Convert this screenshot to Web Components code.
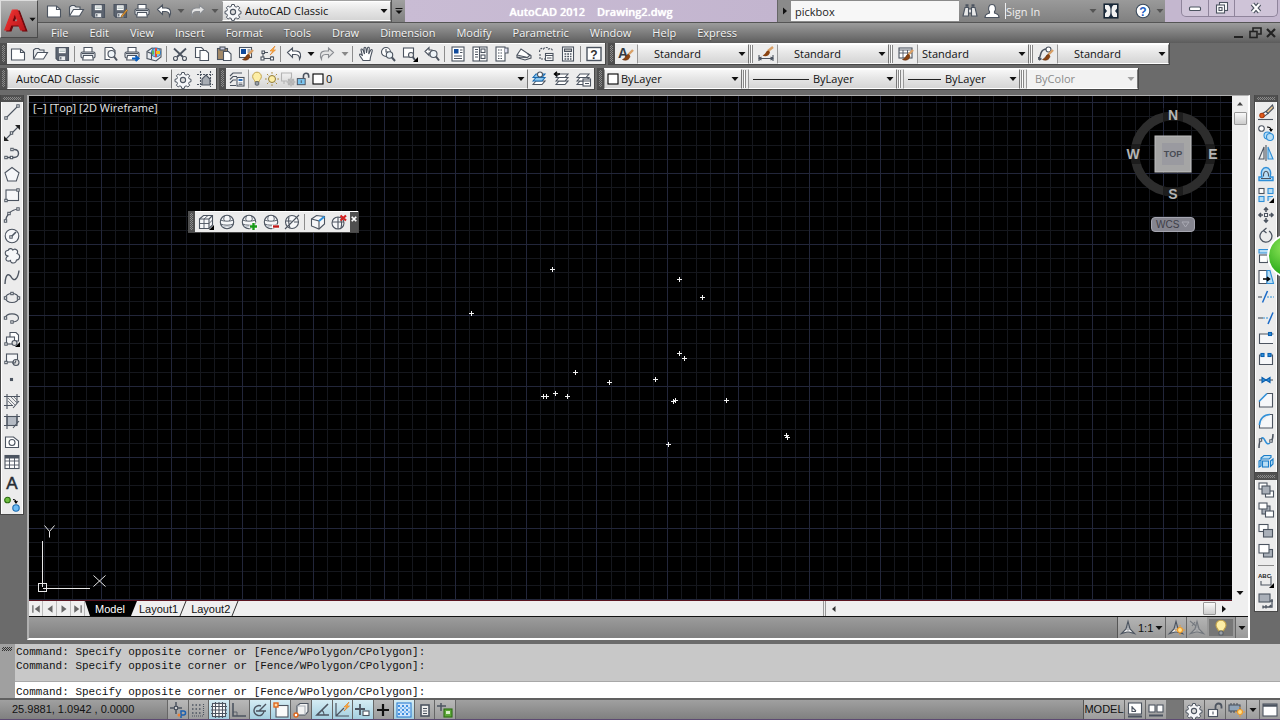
<!DOCTYPE html>
<html lang="en">
<head>
<meta charset="utf-8">
<title>AutoCAD 2012 Drawing2.dwg</title>
<style>
html,body{margin:0;height:100%}
body{font-family:"Open Sans","Noto Sans",sans-serif;font-size:11px;color:#111;background:#6b6b6b;overflow:hidden}
</style>
</head>
<body>
<cad-app></cad-app>
<script>
const BASE = `*{box-sizing:border-box}
button,select,input{font:inherit;color:inherit;margin:0;padding:0;border:0;background:none;border-radius:0;outline:0}
ul{list-style:none;margin:0;padding:0}`;

function define(tag, css, html) {
  const template = document.createElement('template');
  customElements.define(tag, class extends HTMLElement {
    connectedCallback() {
      if (this.shadowRoot) return;
      template.innerHTML = `<style>${BASE}${css}</style>${typeof html === 'function' ? html(this) : html}`;
      this.attachShadow({mode: 'open'}).append(template.content.cloneNode(true));
    }
  });
}

/* Icon shapes on a 16 x 16 grid; the default pen is dark and unfilled. */
const L = '#f6f7f9', B = '#2f8fd8', PB = '#b9def5';
const brush = '<path d="M15 4l-5 5" stroke="#d9a066" stroke-width="2.4"/><path d="M10.5 8.500c-3 0-2 3.500-6 5 3 1.500 7 .5 7.500-3.500z" fill="#8a4312" stroke="#5c2c0c" stroke-width=".6"/>';
const glow = (x, y) => `<circle cx="${x}" cy="${y}" r="2.500" fill="#ffe08a" stroke="#f59b23"/><path d="M${x} ${y - 5}v1.500M${x} ${y + 3.5}v1.500M${x - 5} ${y}h1.500M${x + 3.5} ${y}h1.500" stroke="#f59b23"/>`;
const node = (x, y, f = '#fff') => `<rect x="${x - 1.2}" y="${y - 1.2}" width="2.400" height="2.400" fill="${f}" stroke-width="1"/>`;
const printer = `<path d="M4 6V1.500h8V6" fill="#fff"/><rect x="1" y="6" width="14" height="6" rx="1.500" fill="#dfe2e6"/><path d="M3.500 9.500h9l.8 4.500H2.700z" fill="#fff"/><path d="M2 7.500h12"/>`;
const floppy = `<path d="M2 1.500h12.500v13H4L2 12.500z" fill="#5c6470"/><rect x="4.500" y="2" width="7.500" height="5.500" fill="#fff" stroke-width=".6"/><path d="M5.500 4h5.500M5.500 5.500h5.500" stroke="#9aa" stroke-width=".7"/><rect x="5" y="10" width="6.500" height="4.500" fill="#eceef0" stroke-width=".6"/><path d="M6.800 11v2.500"/>`;
const lens = `<circle cx="9.500" cy="8" r="3.500" fill="#eef4f8"/><path d="M12 10.500l3 4" stroke-width="2"/>`;
const sphere = `<circle cx="8" cy="8" r="6.700" fill="${L}"/><path d="M1.500 6c3 1.600 10 1.600 13 0M1.500 10c3 1.600 10 1.600 13 0M5.500 2c-1 3-1 3 0 5M10.500 2c1 3 1 3 0 5" stroke-width=".9"/><path d="M3 11.500c3 1.500 7 1.500 10 0" stroke="#c3c9d2"/>`;
const cube = `<path d="M1.500 5l4-3.500h9V11L11 14.500H1.500z" fill="${L}"/><path d="M1.500 5H11v9.500M11 5l3.500-3.500"/>`;
const compass = f => `<path d="M8 1.500l2 7.500 4.500 4.500-5.500-1.500h-2L1.500 13.500 6 9z" fill="${f}" stroke-width="1.200"/><path d="M8 5l1 5H7z" fill="#fff" stroke-width=".5"/>`;
const gear = `<path d="M6.700 1.500h2.600l.4 1.900 1.500.7 1.700-1.100 1.800 1.800-1.100 1.700.6 1.400 1.800.4v2.400l-1.800.4-.6 1.500 1.100 1.600-1.800 1.800-1.700-1.100-1.500.6-.4 1.900H6.700l-.4-1.900-1.500-.6-1.600 1.100-1.800-1.800 1.100-1.600-.6-1.500L0 10.700V8.300l1.900-.4.6-1.400-1.100-1.700L3.200 3l1.600 1.100 1.500-.7z" fill="${L}" stroke-width="1"/><circle cx="8" cy="9" r="2.600" fill="#ddd"/>`;
const lock = c => `<rect x="1.500" y="7.500" width="9" height="7" fill="${c}"/><path d="M8.500 7V4.500a3 3 0 0 1 6 0V6.500" stroke-width="1.800"/><path d="M6 9.500v3"/>`;
const stack = (x = 0) => `<path d="M${2 + x} 13.500l3-3.500h9l-3 3.500z" fill="#fff"/><path d="M${2 + x} 10l3-3.500h9l-3 3.500z" fill="#fff"/><path d="M${2 + x} 6.500l3-3.500h9l-3 3.500z" fill="#fff"/>`;
const bulb = `<path d="M5.500 11c0-2-2.500-3-2.500-5.800a5 5 0 0 1 10 0C13 8 10.500 9 10.500 11z" fill="#fdeea6" stroke="#c2a24a"/><rect x="6" y="11" width="4" height="4" rx="1" fill="#9aa0a6" stroke="#5a6068"/>`;
const two = (a, b) => `<rect x="1" y="1.500" width="9" height="7" fill="${a}"/><rect x="5.500" y="6.500" width="9" height="7.500" fill="${b}"/>`;
const ICONS = {
  new: `<path d="M1.500 3h9l4 3.500V14h-13z" fill="#fff"/><path d="M10.500 3v3.500h4"/>`,
  open: `<path d="M1.500 12.500V4l2-1.500h3L8 4h4v2.500" fill="#e8eaed"/><path d="M1.500 13l4-6.500h10l-4 6.500z" fill="#fff"/>`,
  save: floppy,
  saveas: floppy + '<path d="M15.500 7.500l-5 6-1.500 1 .5-2 5-6z" fill="#f3a33a" stroke="#8a5a1a" stroke-width=".7"/>',
  print: printer,
  preview: `<path d="M3 1.500h7l3 3V8M3 1.500v12h5" fill="#fff"/>` + lens,
  publish: printer + `<path d="M8 12.500h6M11.500 10l3 2.500-3 2.500" stroke="#0a5fc0" stroke-width="2"/>`,
  dwf: `<path d="M1 5.500l5-3.500 9 1v8l-5 4-9-2.500z" fill="#e8ebef"/><circle cx="10" cy="6.500" r="4.500" fill="#7fc4e8" stroke="#3678b8"/><path d="M10 2v9" stroke="#e14a3a" stroke-width="2"/><path d="M10 6.500h4" stroke="#f0c020" stroke-width="3"/><path d="M7 4.500v4" stroke="#5cb85c" stroke-width="2"/><path d="M1.500 6l4 1.500v6"/>`,
  undo: `<path d="M1.500 6.500L6.500 2v3H10c5 0 5.500 5 3.500 8.500 0-3-1-5-4-5h-3v3z" fill="#fff"/>`,
  redo: `<path d="M14.500 6.500L9.500 2v3H6C1 5 .5 10 2.500 13.500c0-3 1-5 4-5h3v3z" fill="#e4e4e4" stroke="#8a8d92"/>`,
  gear,
  cut: `<path d="M2 2.500l9 8.500M14 2.500L5 11" stroke-width="1.800"/><circle cx="3.500" cy="12.500" r="2"/><circle cx="12.500" cy="12.500" r="2"/>`,
  copyclip: `<path d="M1.500 1.500h6l2 2v8h-8z" fill="#fff"/><path d="M6 4.500h6l2.500 2.500v7.500H6z" fill="#fff"/>`,
  paste: `<rect x="1.500" y="2.500" width="10" height="11" fill="#a48a68"/><rect x="4" y="1" width="5" height="3" fill="#ccd"/><path d="M7.500 5.500h5l2.500 2.500v6.500H7.500z" fill="#fff"/>`,
  match: `<rect x="1.500" y="1.500" width="12" height="10" fill="#fff"/><rect x="3" y="3" width="5" height="5" fill="#0f4a9c" stroke="none"/><path d="M9.500 4h3M9.500 6h3"/>` + brush,
  blockedit: `<path d="M3 6.500h5M3 6.500v6M1 12.500h13M12 10v4" /><rect x="1" y="11" width="3" height="3" fill="#fff"/><rect x="10.500" y="11" width="3" height="3" fill="#fff"/><rect x="2" y="5" width="2.500" height="2.500" fill="#fff"/><path d="M15 0l-5 5h3l-3 4 5.500-5H13z" fill="#ffb347" stroke="#e07b1a" stroke-width=".6"/>`,
  pan: `<path d="M5 14.500C3.500 11.500 1 9.500 1.500 8.500s2 0 3 1.500L3 4c0-1.500 1.500-1 2 0l1.500 4L6 2.500c0-1.500 1.800-1.500 2 0L8.500 7l1-5c.5-1.200 2-1 1.800.5L10.700 8l2-4c.8-1 2-.3 1.500 1L12.500 11l-.5 3.500z" fill="#fff"/>`,
  zoomrt: `<circle cx="6" cy="6" r="4.500" fill="#fff"/><path d="M6 3v3h2.500"/><circle cx="9.500" cy="9" r="3.200" fill="#eef4f8"/><path d="M12 11.500l3 3.500" stroke-width="2"/>`,
  zoomwin: `<rect x="1.500" y="2" width="10" height="9" fill="#fff"/><path d="M10 10l3 4" stroke-width="2"/><circle cx="9" cy="9" r="2.500" fill="#eee"/><path d="M16 11v5h-5z" fill="#000" stroke="none"/>`,
  zoomprev: `<path d="M1 5.500l4-4v2.500h3v3H5V9.500z" fill="#fff"/>` + lens,
  props: `<rect x="2" y="1" width="12" height="14" fill="#fff"/><rect x="4" y="3" width="4.500" height="4.500" fill="#0f4a9c" stroke="none"/><path d="M10 4h2.500M10 6.500h2.500M4 10h8M4 12.500h8"/>`,
  dc: `<rect x="1" y="1" width="14" height="14" fill="#fff"/><path d="M3 3.500h3M3 6h3M3 8.500h3M3 11h3M7.500 1v14"/><rect x="9" y="3" width="4" height="3.500"/><rect x="9" y="9" width="4" height="3.500"/>`,
  palettes: `<rect x="2" y="1" width="9" height="14" fill="#fff"/><path d="M4 4h5M4 7h5M4 10h5M4 12.500h5" stroke-dasharray="1.500 1"/><path d="M11 2h3v5h-3" fill="#dde"/>`,
  sheetset: `<path d="M1 9l4-6 9 6-2.500 2.500z" fill="#fff"/><path d="M1 9v2.500l8 2.500 6-2V9.500l-4-2M1 11l10 .5"/>`,
  markup: `<path d="M1.500 6c0-3 2-4.500 4-3 1-2 5-2 5 0 2-1 4 0 4 2" stroke-dasharray="2 1"/><path d="M2 8v5h5" stroke-dasharray="2 1"/><rect x="7.500" y="7.500" width="7.500" height="7" fill="#fff"/><path d="M7.500 9.500H15M9 12h4.500"/>`,
  calc: `<rect x="2.500" y="1" width="11" height="14" fill="#fff"/><rect x="4.500" y="3" width="7" height="2.500" fill="#bbb"/><path d="M4.500 8h7M4.500 10.500h7M4.500 13h7" stroke-dasharray="1.800 .9" stroke-width="1.500"/>`,
  help: `<rect x="1" y="1.500" width="14" height="13" fill="#fff" stroke-width="1.400"/><text x="8" y="12.500" text-anchor="middle" font-family="Liberation Sans" font-weight="700" font-size="12" fill="#333" stroke="none">?</text>`,
  textstyle: `<text x="0" y="12" font-family="Liberation Sans" font-weight="700" font-size="14" fill="#333b44" stroke="none">A</text>` + brush,
  dimstyle: `<path d="M1 9v6M15 9v6M1 12.500h14M3.500 11L1 12.500 3.500 14M12.500 11l2.500 1.500-2.500 1.500"/><path d="M15 1l-5 4" stroke="#d9a066" stroke-width="2.400"/><path d="M10.500 4.500c-3 0-2 3.500-6 5 3 1.500 7 .5 7.500-3.500z" fill="#8a4312" stroke="none"/>`,
  tablestyle: `<rect x="1" y="2" width="13" height="10" fill="#fff"/><path d="M1 4h13M1 7h13M5 4v8M9.500 4v8" stroke-width=".9"/>` + brush,
  leaderstyle: `<path d="M1 14l2-7c1-3 3-4 6-4M1 14l-.3-3M1 14l2.500-1.500" stroke-width="1.500"/><circle cx="10.500" cy="3.500" r="2.500" fill="#fff"/>` + brush,
  wsframe: `<path d="M0 3.500h16M0 13.500h16M3.500 0v16M13.500 0v16" stroke-dasharray="2 1"/><path d="M5 14V8l4-4 4 4v6z" fill="#a7acb3"/>`,
  layerprops: `<path d="M1 5l3-3h9M1 8.500l3-3h4M1 12l3-3h3M1 14.500h6"/><rect x="8" y="6.500" width="7" height="8.500" fill="#fff"/><rect x="9.500" y="8" width="4" height="2" fill="#2f6fb8" stroke="none"/><path d="M9.500 12h4M9.500 13.500h4" stroke-width=".8"/>`,
  bulb, sun: `<circle cx="8" cy="8" r="4" fill="#fdeea6" stroke="#8a7430"/><path d="M8 0v2M8 14v2M0 8h2M14 8h2M2.300 2.300l1.500 1.500M12.200 12.200l1.500 1.500M13.700 2.300l-1.500 1.500M3.800 12.200l-1.500 1.500" stroke="#a8893a"/>`,
  vpfreeze: `<g stroke="#b4b4b4"><path d="M7 10H1.500V2h10v5M4 10v3"/><circle cx="11" cy="11" r="3" fill="#ddd"/><path d="M11 6.500v9M6.500 11h9M8 8l6 6M14 8l-6 6"/></g>`,
  unlock: lock('#7cc4ee'), unlockgray: lock('#fff'),
  swatch: `<rect x="3" y="3" width="10" height="10" fill="#fff" stroke="#000"/>`,
  layercur: `<path d="M2 13.500l3-3.500h9l-3 3.500z" fill="#fff"/><path d="M2 10l3-3.500h9l-3 3.500zM2 6.500l3-3.500h9l-3 3.500z" fill="#8cc8f0" stroke="#1a6ab0"/><circle cx="9" cy="3.500" r="2.500" fill="#fff"/>`,
  layerprev: stack(1) + `<path d="M7 3H1.500M4 .8L1.500 3 4 5.200" stroke="#000" stroke-width="1.500"/>`,
  layerstates: stack() + `<rect x="8" y="8" width="7.500" height="7" fill="#fff"/><path d="M8 10h7.500M10 12.500h4"/>`,
  binoc: `<path d="M1 13L3 4.500h3.500V13zM9.500 13V4.500H13L15 13zM6.500 6h3v4h-3z" fill="#e8e8e8"/><path d="M3.500 2.500h3M9.500 2.500h3" stroke-width="2.500"/>`,
  user: `<path d="M1 14.500c0-4 3-3.500 4.500-4.500v-1.500C4 7 4 1.500 8 1.500s4 5.500 2.500 7V10c1.500 1 4.500.5 4.500 4.500z" fill="#fff"/>`,
  exchange: `<rect x="1" y="1" width="14" height="14" fill="#1f2f42" stroke="#11202f"/><path d="M2 2h3.500c2 1.500 2 4 2 6s0 4.500-2 6H2zM14 2h-3.500c-2 1.500-2 4-2 6s0 4.500 2 6H14z" fill="#f2f2f2" stroke="none"/><path d="M2 5.500l2 2.500-2 2.500zM14 5.500L12 8l2 2.500z" fill="#1f2f42" stroke="none"/>`,
  about: `<circle cx="8" cy="8" r="6.800" fill="#fff" stroke="#3a4a5c"/><text x="8" y="12.500" text-anchor="middle" font-family="Liberation Sans" font-weight="700" font-size="12" fill="#1f5fc4" stroke="none">?</text>`,
  line: `<path d="M2.500 13.500l11-11"/>` + node(2, 14) + node(14, 2),
  xline: `<path d="M2 14L14 2"/><path d="M0 16v-5l5 5zM16 0v5l-5-5z" fill="#222" stroke="none"/>` + node(7.5, 8),
  pline: `<path d="M2 12.500h8c6 0 6-8 0-8" stroke-width="1.400"/>` + node(2, 12.5) + node(7.5, 12.5) + node(8, 4.5),
  polygon: `<path d="M8 1.500l7 5.300L12.300 15H3.700L1 6.800z" fill="${L}"/>`,
  rect: `<rect x="2" y="3" width="12.500" height="10.500" fill="${L}"/>` + node(2, 13.5) + node(14, 3),
  arc: `<path d="M1.500 14.500C2 8 7 2.500 14.500 2"/>` + node(1.5, 14) + node(5, 6.5) + node(14, 2),
  circle: `<circle cx="8" cy="8" r="6.800" fill="${L}"/><path d="M7.500 8.500l4.500-4.500" stroke-width="1.600"/>` + node(7, 9),
  cloud: `<path d="M4.500 8C0 8 .500 2 4 2.500 5-.5 9 .5 8.500 2.500 11-.5 15 2.500 13 5.500c4 1 3 6.500-.5 6.500-.5 4-6 4-6 .500C2 15 0 9.500 4.500 8z" fill="${L}"/>`,
  spline: `<path d="M1 15C1.500 4 5 4 7.500 8.500S14 10 15 1.500" stroke-width="1.400"/>`,
  ellipse: `<ellipse cx="8" cy="8" rx="6.500" ry="4.500"/>` + node(1.5, 8) + node(14.5, 8) + node(8, 3.5),
  elarc: `<path d="M1.500 8C2 2.500 14 2.500 14.500 8c0 2.500-3 4-6.500 4"/>` + node(1.5, 8) + node(8, 12),
  insert: `<path d="M6 1.500h6l2.500 2.500v6H6z" fill="#fff"/><rect x="2.500" y="6" width="8" height="7" fill="${L}"/><circle cx="10.500" cy="12" r="2.500" fill="#ddd"/>` + node(2, 13) + `<path d="M16 11v5h-5z" fill="#000" stroke="none"/>`,
  block: `<rect x="2.500" y="3" width="11" height="8" fill="${L}"/><circle cx="12" cy="11.500" r="3" fill="#ddd"/><path d="M8 12h3l1-2.500"/>` + node(2, 11.5),
  point: `<rect x="6.500" y="6.500" width="2" height="2" fill="#666"/>`,
  hatch: `<path d="M0 3.500h16M0 12.500h9M3 1v15M13 1v8M9 15l6-7"/><path d="M4 5l7 7M7 4l6 6M4 8l4.500 4.500M10 4l3 3" stroke-width=".7"/>`,
  gradient: `<rect x="3" y="3.500" width="10" height="9" fill="#b4bac3"/><path d="M0 3.500h16M0 12.500h10M3 1v15M13 1v9M9 15l6-7"/>`,
  region: `<path d="M1.500 3h8l5 4v6.500h-13z" fill="#fff"/><circle cx="8" cy="8.500" r="3"/>`,
  table: `<rect x="1" y="1.500" width="14" height="13" fill="#fff"/><path d="M1 3h14" stroke-width="3"/><path d="M1 7h14M1 11h14M5.500 4v10.500M10.500 4v10.500" stroke-width=".9"/>`,
  mtext: `<text x="8" y="14" text-anchor="middle" font-family="Liberation Sans" font-size="17" fill="#262c33" stroke="#262c33" stroke-width=".5">A</text>`,
  addsel: `<circle cx="3.500" cy="4" r="2.800" fill="#6fbf3f" stroke="#2c6e12"/><circle cx="12" cy="12" r="3.200" fill="#6cbcf5" stroke="#1a6ab0"/><path d="M9 3.500c2 0 3 1 3 3M10.500 5l1.500 2 1.500-2" stroke="#000"/>`,
  erase: `<path d="M14.500 1L8 7.500l2 2L15.500 4z" fill="#e9c58f"/><path d="M8 7.500L3.500 10l2 3L10 9.500z" fill="#fff"/><circle cx="4" cy="11.500" r="2.200" fill="#e05a1a" stroke="#b03a0a"/><path d="M0 15.500h15"/>`,
  copy: `<circle cx="3.500" cy="3.500" r="2.800" fill="#fff"/><path d="M9 2c3 0 4 1 4 3M11.500 4l1.500 2 1.500-2" stroke="#000"/><circle cx="9.500" cy="10.500" r="3.500" fill="${PB}" stroke="${B}"/><circle cx="12" cy="12" r="3.500" fill="${PB}" stroke="${B}"/>`,
  mirror: `<path d="M6 2v12H1zM8 0v16"/><path d="M10 2v12h5z" fill="${PB}" stroke="${B}"/>`,
  offset: `<path d="M1 14.500v-3.500h3C2 5 5 1.500 8 1.500S14 5 12 11h3v3.500z" fill="${PB}" stroke="${B}" stroke-width="1.400"/><path d="M3 12.500h10M5.500 10.500c-.5-7 5.500-7 5 0"/>`,
  array: `<rect x="1" y="1.500" width="5" height="5" fill="#fff"/><g fill="${PB}" stroke="${B}"><rect x="10" y="1.500" width="5" height="5"/><rect x="1" y="9.500" width="5" height="5"/><path d="M10 14V9.500h5"/></g><path d="M16 11v5h-5z" fill="#000" stroke="none"/>`,
  move: `<path d="M8 1v4M8 11v4M1 8h4M11 8h4M6 3l2-2 2 2M6 13l2 2 2-2M3 6L1 8l2 2M13 6l2 2-2 2" stroke-width="1.600"/><rect x="6.500" y="6.500" width="3" height="3" fill="#fff"/>`,
  rotate: `<path d="M6 2.500a6 6 0 1 0 5 .5M8.500 0L5.500 2.500l3 2.500" stroke-width="1.300"/>`,
  scale: `<path d="M1 1.500h14v12.500h-4V5H1z" fill="${PB}" stroke="${B}"/><rect x="1.500" y="7" width="8" height="7.500" fill="#fff"/>`,
  stretch: `<path d="M1 1.500h8v13H1z" fill="#fff"/><path d="M9 1.500h3l3.500 13H9z" fill="${PB}" stroke="${B}"/><path d="M5 10h6M9 8l2.500 2L9 12" stroke="#000" stroke-width="1.500"/>`,
  trim: `<path d="M0 8h4"/><path d="M9 8h7" stroke="${B}" stroke-dasharray="2 1"/><path d="M4.500 13.500L9.500 2" stroke="#1a6ac8" stroke-width="1.500"/>`,
  extend: `<path d="M0 8h5"/><path d="M5 8h6" stroke="${B}" stroke-dasharray="2 1"/><path d="M10 14L15 2.500" stroke="#1a6ac8" stroke-width="1.500"/>`,
  breakpt: `<path d="M15.500 4H1.500v9.500h13.500" fill="${L}"/><rect x="10.500" y="2.500" width="3" height="3" fill="${B}" stroke="#0a5fb0"/>`,
  break: `<path d="M4 4H1.500v9.500h13V4H12" fill="${L}"/><rect x="3" y="2.500" width="3" height="3" fill="${B}" stroke="#0a5fb0"/><rect x="10" y="2.500" width="3" height="3" fill="${B}" stroke="#0a5fb0"/>`,
  join: `<path d="M1 8h14"/><path d="M4 5.500L8 8l-4 2.500zM12 5.500L8 8l4 2.500z" fill="${B}" stroke="#0a5fb0"/>`,
  chamfer: `<path d="M1.500 9v6h13V1.500H9" fill="${L}"/><path d="M1 9.500L9 1.500" stroke="${B}" stroke-width="1.600"/>`,
  fillet: `<path d="M1.500 11v4h13V1.500H12" fill="${L}"/><path d="M1.500 12C1.500 6 6 1.500 12 1.500" stroke="${B}" stroke-width="1.600"/>`,
  blend: `<path d="M1 15c0-4 .5-7 2-9M13 9c1.500-2 2-4 2-8" stroke-width="1.500"/><path d="M3 6c4-5 4 8 9 4" stroke="${B}" stroke-width="1.600"/>` + node(2.5, 7) + node(13, 8),
  explode: `<g fill="${PB}" stroke="#1a7cc8"><path d="M3 4l3-2.500h7v2l-2 1.500H3zM12.500 7l2.500-2v5l-2.500 2.500z"/><rect x="4.500" y="7" width="6" height="6"/><path d="M1 7l2-1v6l-2 1z"/></g>`,
  front: `<rect x="1" y="1" width="8" height="6" fill="#fff"/><rect x="7.500" y="9" width="8" height="6" fill="#fff"/><rect x="4" y="4" width="8" height="8" fill="#a9afb8"/>`,
  back: `<rect x="4" y="4" width="8" height="8" fill="#a9afb8"/><rect x="1" y="1" width="8" height="6" fill="#fff"/><rect x="7.500" y="9" width="8" height="6" fill="#fff"/>`,
  above: two('#fff', '#a9afb8'), under: `<rect x="5.500" y="6.500" width="9" height="7.500" fill="#a9afb8"/><rect x="1" y="1.500" width="10" height="8.500" fill="#fff"/>`,
  textfront: `<text x="0" y="6" font-family="Liberation Sans" font-weight="700" font-size="6" fill="#222" stroke="none">ABC</text><path d="M3 9v4h10V4"/><path d="M16 11v5h-5z" fill="#000" stroke="none"/>`,
  hatchback: `<rect x="1" y="1" width="11" height="8" fill="#a9afb8"/><path d="M5 14h9V6M5 12.500v3M8 12v3.500M12 8h3M11 14l2-2" stroke-width="1.300"/>`,
  meshcube: cube + `<path d="M6 5v9.500M1.500 9.500H11l3.500-3.500M6 5l4-3.500" stroke-width=".9"/><path d="M16 11v5h-5z" fill="#000" stroke="none"/>`,
  mesh: sphere,
  meshadd: sphere + `<path d="M12.500 8v8M8.500 12.500h8" stroke="#fff" stroke-width="4"/><path d="M12.500 9v7M9 12.500h7" stroke="#1a9a1a" stroke-width="2.400"/>`,
  meshsub: sphere + `<path d="M9 12.500h7" stroke="#fff" stroke-width="4"/><path d="M10 12.500h6" stroke="#c01818" stroke-width="2.400"/>`,
  meshref: `<circle cx="8" cy="8" r="6.500" fill="${L}"/><path d="M1 15L15 1M1.500 7h6M5 3c-1 4 0 8 1 11M10 8h4.500"/>`,
  crease: `<path d="M1.500 5l5-3.500 8 1V10L9 15l-7.500-3z" fill="${L}"/><path d="M1.500 5l7.500 2v8"/><path d="M9 7l5.500-4.500" stroke="${B}" stroke-width="2"/>`,
  uncrease: `<circle cx="7" cy="9" r="6" fill="${L}"/><path d="M1 8h12M7 3v12M10 14c1-3 1-5 0-8"/><path d="M9.500 1.500l5.500 5M15 1.500l-5.500 5" stroke="#d42020" stroke-width="2.200"/>`,
  anno: compass('#f2f2f2'),
  annovis: compass('#f2f2f2') + glow(12, 10),
  annoauto: `<g opacity=".55">${compass('#bbb')}<path d="M1 1l6 5M3 6l3-4"/></g>`,
  infer: `<path d="M6 0v12M0 6h12" stroke-width="1.500"/><rect x="4.500" y="4.500" width="3" height="3" fill="#ddd"/><path d="M11 16V9h2.500a2 2 0 0 1 0 4H11" stroke="#1a5fb0" stroke-width="1.500"/><circle cx="9" cy="13" r="1.500" fill="#f08030" stroke="none"/>`,
  snap: `<path d="M2 3h9M2 7h9M2 11h9" stroke-dasharray="1.500 2" stroke-width="1.500"/><path d="M13.500 2v12M2 14h12" stroke-dasharray="1 1"/>`,
  grid: `<rect x="1.500" y="1.500" width="13" height="13" fill="#fff"/><path d="M4.500 0v16M8 0v16M11.500 0v16M0 4.500h16M0 8h16M0 11.500h16"/>`,
  ortho: `<path d="M2 1v13h13" stroke-width="1.600"/><path d="M2 10h4v4" stroke-width=".8"/>`,
  polar: `<path d="M12 9a5 5 0 1 1-3-5M4 9h10M7 9l7-7" stroke-width="1.400"/>`,
  osnap: `<rect x="3" y="3.500" width="12" height="11.500" fill="#fafafa"/><rect x="1" y="1" width="4" height="4" fill="#ffd9a8" stroke="#e0661a" stroke-width="1.400"/>`,
  osnap3d: `<path d="M4 4l3-2.500h8v8L12 13H4z" fill="#f2f2f2"/><path d="M4 4h8v9" stroke="#a8aeb6"/><circle cx="3" cy="13" r="2" fill="#fff" stroke="#e0661a" stroke-width="1.400"/>`,
  otrack: `<path d="M14 2L3 13h12" stroke-width="1.600"/><path d="M8 8a7 7 0 0 1 2 5"/>`,
  ducs: `<path d="M2 1v13h13M2 14l8-8" stroke-width="1.200"/><path d="M15 0l-5 5h3l-3 4 5.500-5H13z" fill="#ffb347" stroke="#e07b1a" stroke-width=".6"/>`,
  dyn: `<path d="M5 2v11M0 7h10" stroke-width="1.800"/><rect x="8" y="9" width="6" height="4.500" fill="#fff"/>`,
  lwt: `<path d="M2 8h12M8 2v12" stroke="#111" stroke-width="2.200"/>`,
  tpy: `<rect x="1" y="1" width="14" height="14" fill="#cfe6fb" stroke="#2f7fd0"/><path d="M2 4h12M2 8h12M2 12h12" stroke="#3f8fe0" stroke-dasharray="2 2" stroke-width="2"/><path d="M4 6h12M4 10h12" stroke="#6fb0f0" stroke-dasharray="2 2" stroke-width="1.500"/>`,
  qp: `<rect x="4" y="3" width="8" height="11" fill="#eee" stroke-width="1.600"/><path d="M6 6.500h4M6 9h4M6 11.500h4"/>`,
  sc: `<path d="M4 1v8M0 4h9" stroke-width="1.500"/><rect x="7" y="7" width="8" height="8" fill="#5da83a" stroke="#2c6e12"/><rect x="9" y="9" width="4" height="3" fill="#d8efc8" stroke="none"/>`,
  modelsp: `<rect x="1.500" y="1" width="13" height="11" fill="#fff"/><path d="M5 4v6M5 5l4 4M9 9.500H5"/><path d="M1 14.500h14" stroke-width="2"/>`,
  qview: `<rect x="1" y="3" width="6" height="7" fill="#fff"/><rect x="9" y="3" width="6" height="7" fill="#fff"/><path d="M1 13.500h14" stroke-width="2"/>`,
  hw: `<rect x="1" y="3" width="11" height="6" fill="#8fa3b8"/><path d="M3 1v2M6 1v2M9 1v2M3 9v2M6 9v2"/>` + glow(12, 10),
  clean: `<rect x="1" y="2" width="14" height="12" fill="#fff"/><path d="M1 3.500h14" stroke-width="2.500"/>`,
  winmin: `<rect x="2.500" y="7" width="11" height="3.500" rx="1" fill="#fff"/>`,
  winmax: `<rect x="5.500" y="2.500" width="8" height="8" fill="#fff"/><rect x="2.500" y="5" width="8" height="8" fill="#fff"/><rect x="5" y="7.500" width="3" height="3"/>`,
  winclose: `<path d="M4.500 4l7 8M11.500 4l-7 8" stroke-width="4.400"/><path d="M4.500 4l7 8M11.500 4l-7 8" stroke="#fff" stroke-width="2"/>`,
  docmin: `<path d="M3 12h9" stroke="#222" stroke-width="2"/>`,
  docmax: `<path d="M6 6V3h8v6h-3" stroke="#222" stroke-width="1.600"/><rect x="3" y="6.500" width="7" height="6" stroke="#222" stroke-width="1.600"/>`,
  docclose: `<path d="M4 4l8 8M12 4l-8 8" stroke="#222" stroke-width="2.200"/>`,
  close: `<path d="M3.500 3.500l9 9M12.500 3.500l-9 9" stroke="#fff" stroke-width="3.500"/>`,
  down: `<path d="M1 4h14l-7 8z" fill="#111" stroke="none"/>`,
  up: `<path d="M2 11h12L8 4z" fill="#444" stroke="none"/>`,
  left: `<path d="M11 2v12L4 8z" fill="#333" stroke="none"/>`,
  right: `<path d="M4 1v14l8-7z" fill="#111" stroke="none"/>`,
  first: `<path d="M14 2v12L6 8z" fill="#666" stroke="none"/><path d="M3 2v12" stroke="#666" stroke-width="2"/>`,
  prev: `<path d="M12 2v12L4 8z" fill="#666" stroke="none"/>`,
  next: `<path d="M4 2v12l8-6z" fill="#666" stroke="none"/>`,
  last: `<path d="M2 2v12l8-6z" fill="#666" stroke="none"/><path d="M13 2v12" stroke="#666" stroke-width="2"/>`,
  custom: `<path d="M1 3h14" stroke="#111" stroke-width="2"/><path d="M1 7h14l-7 7z" fill="#111" stroke="none"/>`
};

define('cad-icon', `:host{display:inline-flex;flex:none;width:16px;height:16px}svg{width:100%;height:100%;overflow:visible}`,
  el => `<svg viewBox="0 0 16 16" fill="none" stroke="#4c5460" stroke-width="1.100" aria-hidden="true">${ICONS[el.getAttribute('name')]}</svg>`);

define('tool-button', `:host{display:flex;flex:none;width:22px}
  :host([small]){width:11px}
  :host([mini]){width:13px}
  button{flex:1;display:flex;align-items:center;justify-content:center;min-width:0}
  :host([small]) cad-icon,:host([mini]) cad-icon{width:8px;height:8px}
  :host([nav]) cad-icon{width:10px;height:10px}
  :host([pale]) cad-icon{opacity:.45}`,
  el => `<button type="button" aria-label="${el.getAttribute('label')}"><cad-icon name="${el.getAttribute('icon')}"></cad-icon></button>`);

define('tool-sep', `:host{display:block;flex:none;width:4px;padding:2px 1px}
  i{display:block;height:100%;width:1px;background:#8c8c8c}
  :host([flat]){width:auto;padding:4px 2px} :host([flat]) i{height:1px;width:100%}
  :host([grip]){width:6px;padding:1px;background:#ececec} :host([grip]) i{width:3px;border:solid #888;border-width:0 1px;background:#fff}`, `<i></i>`);

define('tool-bar', `:host{display:flex;flex:none;background:#ececec;border:1px solid #484848;border-width:0 1px 1px 0}
  .grip{flex:none;width:7px;background:repeating-conic-gradient(#8a8a8a 0 25%,#4f4f4f 0 50%) 0 0/2px 2px;border:2px solid #4f4f4f}
  .tray{flex:1;min-width:0;display:flex;border-top:1px solid #fff}
  :host([vertical]){flex-direction:column;border-width:0 1px 1px 1px}
  :host([vertical]) .grip{width:auto;height:7px}
  :host([vertical]) .tray{flex-direction:column;border:0 solid #fff;border-width:0 1px}
  ::slotted(tool-button){min-height:0}
  :host([even]) ::slotted(tool-button){flex:1}
  :host([vertical]) ::slotted(tool-button){flex:1;width:auto}`,
  `<div class="grip"></div><div class="tray"><slot></slot></div>`);

define('cad-combo', `:host{display:flex;flex:none;position:relative;align-items:center;background:linear-gradient(#f7f7f7,#e6e6e6 45%,#d5d5d5);border:1px solid #fff;border-right-color:#777;border-left-color:#999;font-size:11px}
  :host([disabled]){background:#f2f2f2;color:#8b8b8b}
  select{flex:1;min-width:0;align-self:stretch;appearance:none;padding:0 14px 2px var(--pad,4px)}
  select:disabled{color:#8b8b8b;opacity:1}
  .arrow{position:absolute;right:2px;width:8px;height:8px;pointer-events:none}
  :host([disabled]) .arrow{opacity:.35}
  ::slotted(*){flex:none}`,
  el => `<slot></slot><select aria-label="${el.getAttribute('label')}" ${el.hasAttribute('disabled') ? 'disabled' : ''}><option>${el.getAttribute('value')}</option></select><cad-icon class="arrow" name="down"></cad-icon>`);

define('app-header', `:host{display:flex;flex:none;background:#888;height:43px}
  .app{flex:none;width:38px;height:38px;background:linear-gradient(#b4b4b4,#7c7c7c);border:1px solid #4a4a4a;border-left-color:#ddd;border-top-color:#ddd;display:flex;align-items:center}
  .app svg{width:28px;height:36px;overflow:visible;filter:drop-shadow(2px 1px 0 #6d070c)}.app cad-icon{width:7px;height:7px}
  .left{flex:none;width:38px;background:#666}
  .right{flex:1;min-width:0;display:flex;flex-direction:column}
  .title{flex:none;height:23px;display:flex;border-bottom:1px solid #555;background:#c4b7cf}
  .quick{display:flex;background:linear-gradient(#a0a0a0,#808080);padding:0 0 0 5px}
  .quick tool-button[small]{width:12px}
  .quick tool-button.custom{width:14px;border-left:1px solid #555}
  .quick cad-combo{width:169px;margin:1px 0 1px 1px}
  h1{flex:1;margin:0;font-size:11px;font-weight:600;color:#fff;display:flex;gap:12px;justify-content:center;align-items:center;background:linear-gradient(90deg,#c9bcd4,#c3b5cf);text-shadow:0 0 1px #fff}
  .search{display:flex;background:#8a8a8a;border-left:1px solid #666}
  .search input{width:168px;background:#f7f7f7;padding:0 4px;margin:1px 0;font-size:11px;color:#222}
  .info{display:flex;align-items:center;background:linear-gradient(#9a9a9a,#808080);color:#eee;width:206px}
  .info tool-button,.quick tool-button,.search tool-button{align-self:stretch}
  .info button{flex:1;text-align:left;align-self:stretch;border-left:1px solid #eee;margin:3px 0 3px 2px;line-height:1}
  .win{display:flex;align-items:flex-start;width:115px;padding:0 2px 0 16px}
  .win div{flex:1;display:flex;height:17px;border:1px solid #8f849b;border-top:0;border-radius:0 0 5px 5px;background:#cfc4d8}
  .win tool-button{width:26px}.win tool-button+tool-button{border-left:1px solid #8f849b}.win tool-button:last-child{flex:1}
  nav{flex:1;display:flex;align-items:center;background:linear-gradient(#9c9c9c,#6a6a6a 80%,#5c5c5c);color:#f4f4f4;padding:0 1px 1px 13px;text-shadow:0 1px 1px #444}
  ul{flex:1;display:flex;gap:21px}
  a{color:inherit;text-decoration:none;font-size:11px}
  nav tool-button{width:16px;height:16px}`,
  `<div class="left"><button class="app" type="button" aria-label="Application menu">
    <svg viewBox="0 0 28 36" aria-hidden="true"><defs><linearGradient id="r" x1="0" y1="0" x2="1" y2="1"><stop offset="0" stop-color="#ff9a8a"/><stop offset=".35" stop-color="#e22b2b"/><stop offset="1" stop-color="#b01218"/></linearGradient></defs>
    <text x="3" y="29" font-family="Liberation Sans" font-weight="700" font-size="30" fill="url(#r)" stroke="url(#r)" stroke-width="1">A</text></svg>
    <cad-icon name="down"></cad-icon></button></div>
  <div class="right">
    <div class="title">
      <div class="quick"><tool-button icon="new" label="New"></tool-button><tool-button icon="open" label="Open"></tool-button><tool-button icon="save" label="Save"></tool-button><tool-button icon="saveas" label="Save As"></tool-button><tool-button icon="print" label="Plot"></tool-button><tool-button icon="undo" label="Undo"></tool-button><tool-button small pale icon="down" label="Undo list"></tool-button><tool-button icon="redo" label="Redo"></tool-button><tool-button small pale icon="down" label="Redo list"></tool-button>
      <cad-combo label="Workspace" value="AutoCAD Classic"><cad-icon name="gear" style="margin-left:2px"></cad-icon></cad-combo><tool-button small class="custom" icon="custom" label="Customize Quick Access Toolbar"></tool-button></div>
      <h1><span>AutoCAD 2012</span><span>Drawing2.dwg</span></h1>
      <div class="search"><tool-button mini icon="right" label="Collapse search"></tool-button><input aria-label="Search" value="pickbox"></div>
      <div class="info"><tool-button icon="binoc" label="Search"></tool-button><tool-button icon="user" label="Account"></tool-button><button type="button">Sign In</button><tool-button small icon="down" pale label="Sign in options"></tool-button><tool-button icon="exchange" label="Exchange" style="margin:0 10px 0 2px"></tool-button><tool-button icon="about" label="Help"></tool-button><tool-button small icon="down" pale label="Help options"></tool-button></div>
      <div class="win"><div><tool-button icon="winmin" label="Minimize"></tool-button><tool-button icon="winmax" label="Restore"></tool-button><tool-button icon="winclose" label="Close"></tool-button></div></div>
    </div>
    <nav aria-label="Menu bar"><ul>${['File','Edit','View','Insert','Format','Tools','Draw','Dimension','Modify','Parametric','Window','Help','Express'].map(t => `<li><a href="#">${t}</a></li>`).join('')}</ul>
      <tool-button icon="docmin" label="Minimize drawing"></tool-button><tool-button icon="docmax" label="Restore drawing"></tool-button><tool-button icon="docclose" label="Close drawing"></tool-button></nav>
  </div>`);

const btns = list => list.split(' ').map(n => n === '|' ? '<tool-sep></tool-sep>' : n === '-' ? '<tool-sep flat></tool-sep>' : `<tool-button icon="${n}" label="${n}"></tool-button>`).join('');

define('tool-rows', `:host{display:flex;flex-direction:column;flex:none;gap:3px;padding:0 0 5px}
  .row{display:flex;gap:2px;height:22px}
  .line{height:1px;background:#222;margin:0 4px 0 4px}`,
  `<div class="row"><tool-bar>${btns('new open save | print preview publish dwf | cut copyclip paste match blockedit | undo')}<tool-button small icon="down" label="Undo list"></tool-button>${btns('redo')}<tool-button mini pale icon="down" label="Redo list"></tool-button>${btns('| pan zoomrt zoomwin zoomprev | props dc palettes sheetset markup calc | help')}</tool-bar>
   <tool-bar>${btns('textstyle')}<cad-combo label="Text style" value="Standard" style="width:112px;--pad:16px"></cad-combo><tool-sep grip></tool-sep>${btns('dimstyle')}<cad-combo label="Dimension style" value="Standard" style="width:112px;--pad:16px"></cad-combo><tool-sep grip></tool-sep>${btns('tablestyle')}<cad-combo label="Table style" value="Standard" style="width:112px"></cad-combo><tool-sep grip></tool-sep>${btns('leaderstyle')}<cad-combo label="Multileader style" value="Standard" style="width:112px;--pad:16px"></cad-combo></tool-bar></div>
   <div class="row"><tool-bar><cad-combo label="Workspace" value="AutoCAD Classic" style="width:165px;--pad:8px"></cad-combo>${btns('gear wsframe')}</tool-bar>
   <tool-bar>${btns('layerprops')}<cad-combo label="Layer" value="0" style="width:280px;--pad:0px"><cad-icon name="bulb" style="margin-left:1px;width:14px;height:14px"></cad-icon><cad-icon name="sun" style="width:14px;height:14px;margin-left:1px"></cad-icon><cad-icon name="vpfreeze" style="margin-left:1px"></cad-icon><cad-icon name="unlock" style="width:14px;height:14px"></cad-icon><cad-icon name="swatch"></cad-icon></cad-combo>${btns('layercur layerprev layerstates')}</tool-bar>
   <tool-bar><cad-combo label="Color" value="ByLayer" style="width:138px;--pad:0px"><cad-icon name="swatch"></cad-icon></cad-combo><tool-sep grip></tool-sep><cad-combo label="Linetype" value="ByLayer" style="width:149px;--pad:0px"><div class="line" style="width:56px"></div></cad-combo><tool-sep grip></tool-sep><cad-combo label="Lineweight" value="ByLayer" style="width:117px;--pad:0px"><div class="line" style="width:33px"></div></cad-combo><tool-sep grip></tool-sep><cad-combo disabled label="Plot style" value="ByColor" style="width:112px;--pad:8px"></cad-combo></tool-bar></div>`);

/* Grid lines, points and the UCS mark, all in model-view pixels from the top left. */
const grid = (() => {
  let minor = '', major = '';
  for (let k = -4; k < 180; k++) {
    const x = Math.round(71.6 + 14.167 * k) + .5, y = Math.round(6 + 14.2 * k) + .5;
    const vx = `M${x} 0V2000`, hy = `M0 ${y}H2600`;
    if (k % 5 === 0) { major += vx + hy; } else { minor += vx + (k > 0 ? hy : ''); }
  }
  return `<path d="${minor}" stroke="#15171d"/><path d="${major}" stroke="#22263a"/>`;
})();
const POINTS = [[552,269],[679,279],[702,297],[471,313],[679,353],[684,358],[575,372],[655,379],[609,382],[543,396],[546,396],[555,393],[567,396],[673,401],[675,400],[726,400],[786,435],[787,437],[668,444]];
const marks = POINTS.map(([x, y]) => `M${x - 31} ${y - 95.5}h5M${x - 28.5} ${y - 98}v5`).join('');

define('view-cube', `:host{display:flex;flex-direction:column;align-items:center;gap:15px}
  svg{width:96px;height:96px;display:block}
  button{width:44px;height:15px;border-radius:4px;background:#85858f;border:1px solid #a6a6b0;color:#3e3e48;font:10px/1 "Liberation Sans",sans-serif;display:flex;align-items:center;justify-content:space-between;padding:0 4px}
  button svg{width:9px;height:7px}`,
  `<svg viewBox="0 0 96 96" role="img" aria-label="View cube"><circle cx="48" cy="48" r="38" fill="none" stroke="#2d2d2d" stroke-width="9"/>
   <path d="M38 2h20v14H38zM38 80h20v14H38zM0 38h16v20H0zM80 38h16v20H80z" fill="#000" opacity=".35"/>
   <rect x="30" y="30" width="36" height="36" fill="#a5a5a5" stroke="#c0c0c0"/><rect x="37" y="37" width="22" height="22" fill="#9a9aa0"/>
   <g font-family="Liberation Sans" font-weight="700" fill="#b4b4b4" text-anchor="middle" font-size="14"><text x="48" y="14">N</text><text x="48" y="93">S</text><text x="8" y="53">W</text><text x="88" y="53">E</text><text x="48" y="51" font-size="9" fill="#484c54">TOP</text></g></svg>
   <button type="button">WCS<svg viewBox="0 0 9 7" aria-hidden="true"><path d="M1 1h7L4.500 6z" fill="none" stroke="#aaaab4"/></svg></button>`);

define('drawing-view', `:host{display:block;flex:1;min-width:0;position:relative;background:#000;overflow:hidden;border-bottom:1px solid #5a1420}
  .model{position:absolute;inset:0;width:100%;height:100%}
  .label{position:absolute;left:4px;top:4px;display:flex;gap:3px;color:#e6e6e6;font-size:11px;line-height:15px}
  .ucs{position:absolute;left:8px;bottom:0;width:80px;height:80px}
  view-cube{position:absolute;right:11px;top:10px}
  tool-bar{position:absolute;left:159px;top:115px;height:22px;width:171px}
  .x{background:#4f4f4f;width:8px;display:flex;align-items:flex-start;padding-top:3px}
  .x cad-icon{width:8px;height:8px}`,
  `<svg class="model" aria-hidden="true">${grid}<path d="${marks}" stroke="#f2f2f2"/></svg>
   <div class="label"><span>[−]</span><span>[Top]</span><span>[2D Wireframe]</span></div>
   <tool-bar even>${btns('meshcube mesh meshadd meshsub meshref | crease uncrease')}<button class="x" type="button" aria-label="Close toolbar"><cad-icon name="close"></cad-icon></button></tool-bar>
   <view-cube></view-cube>
   <svg class="ucs" viewBox="0 0 80 80" fill="none" stroke="#e8e8e8" aria-hidden="true"><path d="M5.500 21v46M6 68.500h47"/><rect x="1.500" y="63.500" width="8" height="8"/><path d="M7.500 5.500l5 6 5-6M12.500 11.500v6M56.500 55.500l12 11M68.500 55.500l-12 11"/></svg>`);

define('scroll-bar', `:host{display:flex;background:#efefef;flex:none;align-items:center}
  :host([vertical]){flex-direction:column;width:16px}
  cad-icon{width:8px;height:8px;margin:4px}
  i{display:block;width:13px;height:13px;border:1px solid #999;border-radius:1px;background:linear-gradient(#fafafa,#ccc)}
  .track{flex:1;display:flex;align-self:stretch;align-items:center}
  :host(:not([vertical])) .track{justify-content:flex-end}
  :host([vertical]) .track{flex-direction:column}`,
  el => el.hasAttribute('vertical') ? `<cad-icon name="up"></cad-icon><div class="track"><i></i></div><cad-icon name="down"></cad-icon>` : `<cad-icon name="left"></cad-icon><div class="track"><i></i></div><cad-icon name="right"></cad-icon>`);

define('layout-tabs', `:host{display:flex;height:16px;background:#efefef;border-bottom:1px solid #111;flex:none;font:11px/15px "Liberation Sans",sans-serif}
  .nav{display:flex}.nav tool-button{width:14px;border-right:1px solid #bbb}
  .tabs{display:flex;flex:1}
  .tabs button{position:relative;padding:0 11px 0 2px;line-height:16px}
  .tabs button svg{position:absolute;right:2px;top:0;width:8px;height:15px}
  .tabs .on{background:#000;color:#fff;clip-path:polygon(0 0,100% 0,calc(100% - 6px) 100%,5px 100%);padding:0 12px 0 10px}
  scroll-bar{width:409px;margin-right:16px;border-left:3px double #999}`,
  `<div class="nav"><tool-button nav icon="first" label="First"></tool-button><tool-button nav icon="prev" label="Previous"></tool-button><tool-button nav icon="next" label="Next"></tool-button><tool-button nav icon="last" label="Last"></tool-button></div>
   <div class="tabs"><button class="on" type="button">Model</button>${['Layout1','Layout2'].map(t => `<button type="button">${t}<svg viewBox="0 0 8 15" aria-hidden="true"><path d="M7 0L1 15" stroke="#333"/></svg></button>`).join('')}</div>
   <scroll-bar></scroll-bar>`);

define('anno-bar', `:host{display:flex;flex:none;height:21px;justify-content:flex-end;background:linear-gradient(#9c9c9c,#808080)}
  div{display:flex;background:linear-gradient(#b4b4b4,#999)}
  button{display:flex;align-items:center;gap:2px;padding:0 2px;font:11px "Liberation Sans",sans-serif;border-left:1px solid #555;color:#111;width:48px}
  button cad-icon:last-child{width:8px;height:8px}
  tool-button{border-left:1px solid #666;width:21px}
  .bulb{width:28px;background:#777;border:2px solid #999}`,
  `<div><button type="button"><cad-icon name="anno"></cad-icon><span>1:1</span><cad-icon name="down"></cad-icon></button><tool-button icon="annovis" label="Annotation visibility"></tool-button><tool-button icon="annoauto" label="Auto scale"></tool-button><tool-button class="bulb" icon="bulb" label="Isolate objects"></tool-button><tool-button style="width:13px" mini icon="down" label="More"></tool-button></div>`);

define('work-area', `:host{flex:1;min-height:0;display:flex;align-items:stretch;position:relative}
  .side{flex:none;display:flex;flex-direction:column}
  .side tool-bar{width:24px}
  .left{width:27px}.left tool-bar{height:420px}
  .right{width:30px;padding-left:4px}
  .right tool-bar:first-child{height:378px}.right tool-bar:last-child{height:139px}
  .frame{flex:1;min-width:0;display:flex;flex-direction:column;border:solid #b0b0b0;border-width:1px 2px 2px 2px;border-right-color:#fff;border-bottom-color:#fff;margin-bottom:4px}
  .view{flex:1;min-height:0;display:flex}
  .ball{position:absolute;left:calc(100% - 13px);top:139px;width:44px;height:44px;border-radius:50%;border:2px solid #fff;background:radial-gradient(circle at 40% 30%,#8fe65a,#2fae1c 70%)}`,
  `<div class="side left"><tool-bar vertical>${btns('line xline pline polygon rect arc circle cloud spline ellipse elarc insert block point hatch gradient region table mtext addsel')}</tool-bar></div>
   <div class="frame"><div class="view"><drawing-view></drawing-view><scroll-bar vertical></scroll-bar></div><layout-tabs></layout-tabs><anno-bar></anno-bar></div>
   <div class="side right"><tool-bar vertical>${btns('erase copy mirror offset array move rotate scale stretch trim extend breakpt break join chamfer fillet blend explode')}</tool-bar><tool-bar vertical>${btns('front back above under - textfront hatchback')}</tool-bar></div>
   <button class="ball" type="button" aria-label="Desktop helper"></button>`);

define('command-window', `:host{display:flex;flex:none;font:11px/14px "Liberation Mono",monospace;color:#111}
  .grip{flex:none;width:15px;background:#a0a0a0}.grip i{display:block;width:10px;height:4px;margin:3px 2px;background:repeating-conic-gradient(#333 0 25%,transparent 0 50%) 0 0/2px 2px}
  .main{flex:1}
  .log{background:#c8c8c8;height:38px;padding:1px;border-bottom:1px solid #a8a8a8}
  input{display:block;width:100%;height:16px;background:#fff;padding:3px 1px 0}
  p{margin:0}`,
  `<div class="grip"><i></i></div><div class="main"><div class="log" role="log"><p>Command: Specify opposite corner or [Fence/WPolygon/CPolygon]:</p><p>Command: Specify opposite corner or [Fence/WPolygon/CPolygon]:</p></div><input aria-label="Command line" value="Command: Specify opposite corner or [Fence/WPolygon/CPolygon]:"></div>`);

define('status-bar', `:host{display:flex;flex:none;height:22px;border-top:2px solid #606060;border-bottom:1px solid #5d4a72;background:linear-gradient(#a0a0a0,#808080);font:11px/19px "Liberation Sans",sans-serif}
  .xyz{width:167px;padding-left:12px;flex:none}
  .modes{display:grid;grid-template-columns:repeat(14,1fr);width:289px;border-right:1px solid #666}
  .modes tool-button,.end tool-button{width:auto;border-left:1px solid #666;background:linear-gradient(#b8b8b8,#9c9c9c)}
  .modes .on{background:linear-gradient(#d5ecf4,#a4cfe0)}
  .end{display:flex;margin-left:auto}
  .end tool-button{width:21px}
  .end button{border-left:1px solid #555;background:linear-gradient(#b8b8b8,#9c9c9c);width:41px}
  .gap{width:17px;background:#777}
  .end tool-button[mini]{width:13px}`,
  `<div class="xyz">25.9881, 1.0942 , 0.0000</div>
   <div class="modes">${['infer','snap','grid','ortho','polar','osnap','osnap3d','otrack','ducs','dyn','lwt','tpy','qp','sc'].map(n => `<tool-button icon="${n}" label="${n}" class="${/^(grid|polar|osnap$|otrack|ducs|dyn|tpy)/.test(n) ? 'on' : ''}"></tool-button>`).join('')}</div>
   <div class="end"><button type="button">MODEL</button>${btns('modelsp qview')}<div class="gap"></div>${btns('gear unlockgray hw')}<tool-button mini icon="down" label="Status bar menu"></tool-button>${btns('clean')}</div>`);

define('cad-app', `:host{display:flex;flex-direction:column;height:100vh;overflow:hidden;background:#6b6b6b}`,
  `<app-header></app-header><tool-rows></tool-rows><work-area></work-area><command-window></command-window><status-bar></status-bar>`);
</script>
</body>
</html>
